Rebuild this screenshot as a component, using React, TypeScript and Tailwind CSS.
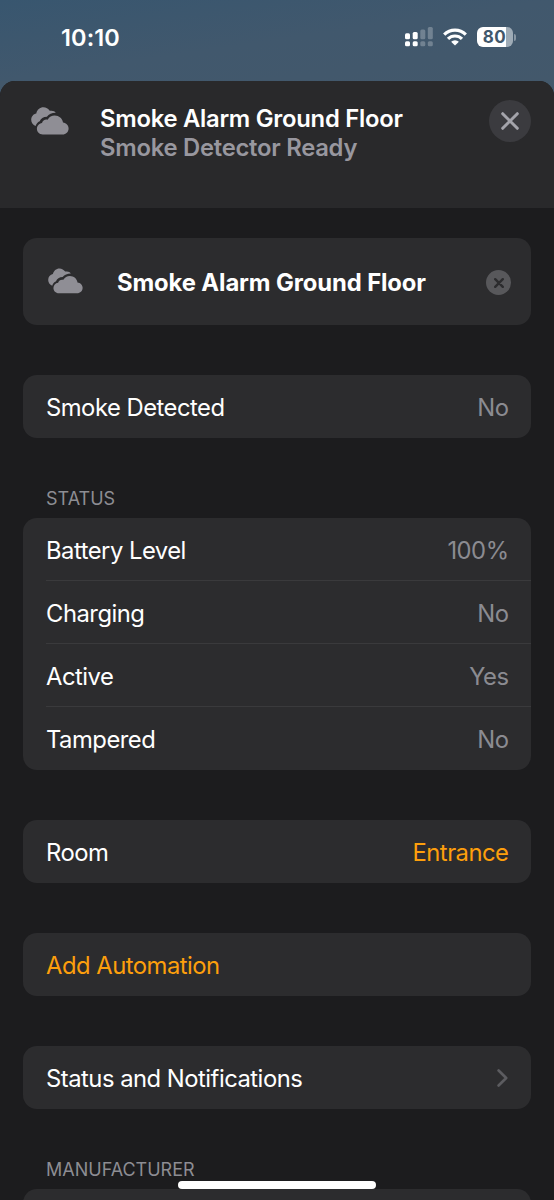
import type { ReactNode } from "react";
import clsx from "clsx";

const statusRows = [
  { label: "Battery Level", value: "100%" },
  { label: "Charging", value: "No" },
  { label: "Active", value: "Yes" },
  { label: "Tampered", value: "No" },
];

function SmokeIcon({ className }: { className?: string }) {
  return (
    <svg viewBox="0 0 38 28" fill="currentColor" className={className}>
      <path d="M4.6 19.1C1.9 18 .2 15.6.2 12.8c0-3.2 2.2-5.8 5.1-6.3C6 2.8 9 .3 12.4.3c2.6 0 4.9 1.4 6.3 3.5 2.7-.5 5.2.2 6.1 2-4 0-7 1.4-8.9 3.9-3.6.1-6.2 1.8-7.2 4.6-2.1.9-3.4 2.5-4.1 4.8Z" />
      <path d="M11.7 27.4c-3.3 0-5.8-2.5-5.8-5.7 0-2.9 2.2-5.4 5.1-5.8.7-2.5 3-3.8 5.7-3.2 1.4-2.6 4.1-4.1 7-4.1 4.3 0 7.8 3 8.3 7 3.2.4 5.6 2.8 5.6 5.8 0 3.4-2.7 6-6.1 6H11.7Z" />
    </svg>
  );
}

function StatusBar() {
  return (
    <div className="flex h-[81px] items-start justify-between bg-linear-to-br from-[#38566f] via-[#41586d] to-[#43586b] pt-[26px] pr-[38px] pl-[61px]">
      <span className="text-[23.5px] leading-[23px] font-semibold tracking-[0.1px]">10:10</span>
      <div className="mt-px flex items-center">
        <svg viewBox="0 0 28 20" className="h-5 w-7" fill="white">
          <rect x="0" y="6.3" width="5" height="6" rx="1.5" />
          <rect x="0" y="14.3" width="5" height="5" rx="1.5" />
          <rect x="7.7" y="5" width="5" height="7.3" rx="1.5" />
          <rect x="7.7" y="14.3" width="5" height="5" rx="1.5" />
          <g opacity="0.25">
            <rect x="15.3" y="2.6" width="5" height="9.7" rx="1.5" />
            <rect x="15.3" y="14.3" width="5" height="5" rx="1.5" />
            <rect x="22.8" y="0" width="5" height="12.3" rx="1.5" />
            <rect x="22.8" y="14.3" width="5" height="5" rx="1.5" />
          </g>
        </svg>
        <svg viewBox="0 0 24 18" className="ml-[10px] h-[18px] w-6" fill="none" stroke="white" strokeWidth="3.2">
          <path d="M1.2 6.6a15.3 15.3 0 0 1 21.6 0" />
          <path d="M5 10.9a9.9 9.9 0 0 1 14 0" />
          <path d="M12 17.6 8.1 13.8a5.5 5.5 0 0 1 7.8 0Z" fill="white" stroke="none" />
        </svg>
        <div className="ml-[10px] flex h-5 w-9 items-center justify-center rounded-[6px] bg-linear-to-r from-white from-80% to-[#9eabb6] to-80% pr-[1px] text-[17px] leading-5 font-bold tracking-[0.5px] text-[#41576b]">
          80
        </div>
        <div className="ml-[1px] h-[7px] w-[2px] rounded-r-full bg-[#8896a3]" />
      </div>
    </div>
  );
}

function SheetHeader() {
  return (
    <header className="flex h-[127px] items-start bg-[#29292b] pr-[23px] pl-[31px]">
      <SmokeIcon className="mt-[26px] h-7 w-[38px] text-[#8f8e95]" />
      <div className="mt-[23px] ml-[31px] flex-1 text-[23.8px] leading-[29px] font-semibold tracking-[-0.25px] whitespace-nowrap">
        <h1>Smoke Alarm Ground Floor</h1>
        <p className="text-[#98979f]">Smoke Detector Ready</p>
      </div>
      <button aria-label="Close" className="mt-[19px] flex size-[42px] items-center justify-center rounded-full bg-[#3b3b3f]">
        <svg viewBox="0 0 18 18" className="size-[18px]" stroke="#a4a4ab" strokeWidth="3" strokeLinecap="round">
          <path d="M1.7 1.7l14.6 14.6M16.3 1.7 1.7 16.3" />
        </svg>
      </button>
    </header>
  );
}

function Card({ children, className }: { children?: ReactNode; className?: string }) {
  return <section className={clsx("rounded-[14px] bg-[#2c2c2e]", className)}>{children}</section>;
}

function Row({ label, value, accent }: { label: string; value?: string; accent?: boolean }) {
  return (
    <div className="flex h-[63px] items-center justify-between px-[23px] pt-[2px] text-[23.8px] tracking-[-0.5px]">
      <span>{label}</span>
      {value && <span className={clsx("-mr-[0.5px]", accent ? "text-[#fd9f0c]" : "text-[#8b8b91]")}>{value}</span>}
    </div>
  );
}

function SectionTitle({ children }: { children: ReactNode }) {
  return <h2 className="mt-[50px] ml-[23px] h-[30px] pt-px text-[18px] leading-[20px] text-[#8d8d93]">{children}</h2>;
}

export default function App() {
  return (
    <main className="relative h-[1200px] w-[554px] overflow-hidden bg-[#43586b] font-['Inter',sans-serif] text-white">
      <StatusBar />
      <div className="h-[1119px] overflow-hidden rounded-t-[15px] bg-[#1c1c1e]">
        <SheetHeader />
        <div className="px-[23px] pt-[30px]">
          <Card className="flex h-[87px] items-center pr-[20px] pl-[25px]">
            <SmokeIcon className="mb-px h-[26px] w-[35px] text-[#8f8e95]" />
            <span className="mt-[3px] ml-[34px] flex-1 text-[23.8px] font-bold tracking-[-0.1px]">Smoke Alarm Ground Floor</span>
            <button aria-label="Clear name" className="mt-[2px] flex size-[25px] items-center justify-center rounded-full bg-[#58585b]">
              <svg viewBox="0 0 10 10" className="size-[10px]" stroke="#2c2c2e" strokeWidth="2.4" strokeLinecap="round">
                <path d="M1.2 1.2l7.6 7.6M8.8 1.2 1.2 8.8" />
              </svg>
            </button>
          </Card>

          <Card className="mt-[50px]">
            <Row label="Smoke Detected" value="No" />
          </Card>

          <SectionTitle>STATUS</SectionTitle>
          <Card>
            {statusRows.map((row, i) => (
              <div key={row.label}>
                {i > 0 && <div className="-mt-px ml-[23px] h-px bg-[#3a3a3c]" />}
                <Row label={row.label} value={row.value} />
              </div>
            ))}
          </Card>

          <Card className="mt-[50px]">
            <Row label="Room" value="Entrance" accent />
          </Card>

          <Card className="mt-[50px] text-[#fd9f0c]">
            <Row label="Add Automation" />
          </Card>

          <Card className="mt-[50px] flex items-center justify-between pr-[23px]">
            <Row label="Status and Notifications" />
            <svg viewBox="0 0 11 18" className="h-[18px] w-[11px]" fill="none" stroke="#5c5c60" strokeWidth="2.6" strokeLinecap="round" strokeLinejoin="round">
              <path d="m1.6 1.5 7.6 7.5-7.6 7.5" />
            </svg>
          </Card>

          <SectionTitle>MANUFACTURER</SectionTitle>
          <Card className="h-[63px]" />
        </div>
      </div>
      {/* home indicator */}
      <div className="absolute top-[1181px] left-[178px] h-[8px] w-[198px] rounded-full bg-white" />
    </main>
  );
}
